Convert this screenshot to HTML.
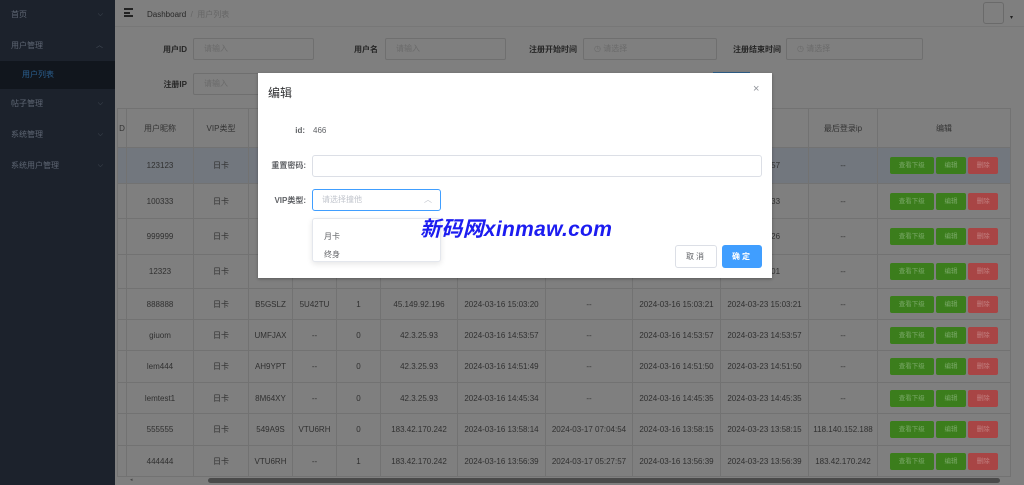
<!DOCTYPE html>
<html><head><meta charset="utf-8"><style>
*{margin:0;padding:0;box-sizing:border-box}
body{width:1024px;height:485px;overflow:hidden;background:#7f7f7f;font-family:"Liberation Sans","Noto Sans CJK SC",sans-serif;font-size:8px;color:#2e2e2e;position:relative}
.a{position:absolute}
.side{left:0;top:0;width:115px;height:485px;background:#1c222c}
.mi{left:0;width:115px;height:30px;line-height:30px;padding-left:11px;color:#5e6673;font-size:8px}
.mi .ar{position:absolute;right:12px;top:0;color:#4d5560;font-size:7px}
.inp{border:1px solid #6f6f6f;border-radius:2px;height:22px;line-height:20px;padding-left:10px;color:#6a6a6a;background:#7f7f7f}
.lbl{font-weight:bold;color:#262626;text-align:right}
table{border-collapse:collapse;position:absolute;left:117px;top:108px;table-layout:fixed}
td{border:1px solid #727272;text-align:center;color:#303030;font-size:8px;white-space:nowrap;overflow:hidden}
.hd td{height:39px;color:#333}
.b{display:inline-block;height:17px;line-height:17px;border-radius:2px;color:#6f8f60;font-size:6.5px;vertical-align:middle}
.g{background:#3b7d1c;color:#7aa868}.r{background:#a84545;color:#c28080}
</style></head><body>
<div class="a side">
<div class="a mi" style="top:0">首页<span class="ar">⌵</span></div>
<div class="a mi" style="top:31px">用户管理<span class="ar">︿</span></div>
<div class="a mi" style="top:61px;height:28px;line-height:28px;background:#11161d;padding-left:22px;color:#2a5f8f">用户列表</div>
<div class="a mi" style="top:89px">帖子管理<span class="ar">⌵</span></div>
<div class="a mi" style="top:120px">系统管理<span class="ar">⌵</span></div>
<div class="a mi" style="top:151px">系统用户管理<span class="ar">⌵</span></div>
</div>
<div class="a" style="left:115px;top:0;width:909px;height:27px;border-bottom:1px solid #777"></div>
<div class="a" style="left:124px;top:8px;width:9px;height:9px;border-top:2px solid #222;border-bottom:2px solid #222"><div style="margin-top:1.5px;width:6px;height:2px;background:#222"></div></div>
<div class="a" style="left:147px;top:9px;color:#282828">Dashboard <span style="color:#666">&nbsp;/&nbsp; 用户列表</span></div>
<div class="a" style="left:983px;top:2px;width:21px;height:22px;border:1px solid #6a6a6a;border-radius:3px"></div>
<div class="a" style="left:1010px;top:14px;font-size:6px;color:#222">▾</div>

<div class="a lbl" style="left:150px;top:44px;width:37px">用户ID</div>
<div class="a inp" style="left:193px;top:38px;width:121px">请输入</div>
<div class="a lbl" style="left:340px;top:44px;width:38px">用户名</div>
<div class="a inp" style="left:385px;top:38px;width:121px">请输入</div>
<div class="a lbl" style="left:520px;top:44px;width:57px">注册开始时间</div>
<div class="a inp" style="left:583px;top:38px;width:134px">◷ 请选择</div>
<div class="a lbl" style="left:725px;top:44px;width:56px">注册结束时间</div>
<div class="a inp" style="left:786px;top:38px;width:137px">◷ 请选择</div>
<div class="a lbl" style="left:150px;top:79px;width:37px">注册IP</div>
<div class="a inp" style="left:193px;top:73px;width:121px">请输入</div>
<div class="a" style="left:713px;top:72px;width:37px;height:2px;background:#2f5f8a"></div>

<table>
<colgroup><col width="9"><col width="67"><col width="55"><col width="44"><col width="44"><col width="44"><col width="77"><col width="88"><col width="87"><col width="88"><col width="88"><col width="69"><col width="133"></colgroup>
<tr class="hd"><td>D</td><td>用户昵称</td><td>VIP类型</td><td></td><td></td><td></td><td></td><td></td><td></td><td></td><td>时间</td><td>最后登录ip</td><td>编辑</td></tr>
<tr style="height:36px;background:#72777e"><td></td><td>123123</td><td>日卡</td><td></td><td></td><td></td><td></td><td></td><td></td><td></td><td>16:37:57</td><td>--</td><td><span class="b g" style="width:44px">查看下级</span> <span class="b g" style="width:30px">编辑</span> <span class="b r" style="width:30px">删除</span></td></tr>
<tr style="height:35px"><td></td><td>100333</td><td>日卡</td><td></td><td></td><td></td><td></td><td></td><td></td><td></td><td>02:19:33</td><td>--</td><td><span class="b g" style="width:44px">查看下级</span> <span class="b g" style="width:30px">编辑</span> <span class="b r" style="width:30px">删除</span></td></tr>
<tr style="height:36px"><td></td><td>999999</td><td>日卡</td><td></td><td></td><td></td><td></td><td></td><td></td><td></td><td>07:06:26</td><td>--</td><td><span class="b g" style="width:44px">查看下级</span> <span class="b g" style="width:30px">编辑</span> <span class="b r" style="width:30px">删除</span></td></tr>
<tr style="height:34px"><td></td><td>12323</td><td>日卡</td><td></td><td></td><td></td><td></td><td></td><td></td><td></td><td>15:05:01</td><td>--</td><td><span class="b g" style="width:44px">查看下级</span> <span class="b g" style="width:30px">编辑</span> <span class="b r" style="width:30px">删除</span></td></tr>
<tr style="height:31px"><td></td><td>888888</td><td>日卡</td><td>B5GSLZ</td><td>5U42TU</td><td>1</td><td>45.149.92.196</td><td>2024-03-16 15:03:20</td><td>--</td><td>2024-03-16 15:03:21</td><td>2024-03-23 15:03:21</td><td>--</td><td><span class="b g" style="width:44px">查看下级</span> <span class="b g" style="width:30px">编辑</span> <span class="b r" style="width:30px">删除</span></td></tr>
<tr style="height:31px"><td></td><td>giuom</td><td>日卡</td><td>UMFJAX</td><td>--</td><td>0</td><td>42.3.25.93</td><td>2024-03-16 14:53:57</td><td>--</td><td>2024-03-16 14:53:57</td><td>2024-03-23 14:53:57</td><td>--</td><td><span class="b g" style="width:44px">查看下级</span> <span class="b g" style="width:30px">编辑</span> <span class="b r" style="width:30px">删除</span></td></tr>
<tr style="height:32px"><td></td><td>lem444</td><td>日卡</td><td>AH9YPT</td><td>--</td><td>0</td><td>42.3.25.93</td><td>2024-03-16 14:51:49</td><td>--</td><td>2024-03-16 14:51:50</td><td>2024-03-23 14:51:50</td><td>--</td><td><span class="b g" style="width:44px">查看下级</span> <span class="b g" style="width:30px">编辑</span> <span class="b r" style="width:30px">删除</span></td></tr>
<tr style="height:31px"><td></td><td>lemtest1</td><td>日卡</td><td>8M64XY</td><td>--</td><td>0</td><td>42.3.25.93</td><td>2024-03-16 14:45:34</td><td>--</td><td>2024-03-16 14:45:35</td><td>2024-03-23 14:45:35</td><td>--</td><td><span class="b g" style="width:44px">查看下级</span> <span class="b g" style="width:30px">编辑</span> <span class="b r" style="width:30px">删除</span></td></tr>
<tr style="height:32px"><td></td><td>555555</td><td>日卡</td><td>549A9S</td><td>VTU6RH</td><td>0</td><td>183.42.170.242</td><td>2024-03-16 13:58:14</td><td>2024-03-17 07:04:54</td><td>2024-03-16 13:58:15</td><td>2024-03-23 13:58:15</td><td>118.140.152.188</td><td><span class="b g" style="width:44px">查看下级</span> <span class="b g" style="width:30px">编辑</span> <span class="b r" style="width:30px">删除</span></td></tr>
<tr style="height:31px"><td></td><td>444444</td><td>日卡</td><td>VTU6RH</td><td>--</td><td>1</td><td>183.42.170.242</td><td>2024-03-16 13:56:39</td><td>2024-03-17 05:27:57</td><td>2024-03-16 13:56:39</td><td>2024-03-23 13:56:39</td><td>183.42.170.242</td><td><span class="b g" style="width:44px">查看下级</span> <span class="b g" style="width:30px">编辑</span> <span class="b r" style="width:30px">删除</span></td></tr>
</table>
<div class="a" style="left:130px;top:477px;font-size:5px;color:#444">◂</div>
<div class="a" style="left:208px;top:478px;width:792px;height:5px;border-radius:3px;background:#4a4a4a"></div>

<div class="a" style="left:258px;top:73px;width:514px;height:205px;background:#fff;box-shadow:0 1px 3px rgba(0,0,0,.3)">
<div class="a" style="left:10px;top:11px;font-size:12px;color:#303133">编辑</div>
<div class="a" style="left:495px;top:10px;font-size:11px;color:#909399">×</div>
<div class="a" style="left:20px;top:53px;width:27px;text-align:right;font-weight:bold;color:#606266">id:</div>
<div class="a" style="left:55px;top:53px;color:#606266">466</div>
<div class="a" style="left:5px;top:87px;width:43px;text-align:right;font-weight:bold;color:#606266">重置密码:</div>
<div class="a" style="left:54px;top:82px;width:450px;height:22px;border:1px solid #dcdfe6;border-radius:3px"></div>
<div class="a" style="left:5px;top:122px;width:43px;text-align:right;font-weight:bold;color:#606266">VIP类型:</div>
<div class="a" style="left:54px;top:116px;width:129px;height:22px;border:1px solid #409eff;border-radius:3px;line-height:20px;padding-left:9px;color:#c0c4cc">请选择撞他<span style="position:absolute;right:8px;color:#c0c4cc">︿</span></div>
<div class="a" style="left:54px;top:145px;width:129px;height:44px;border:1px solid #e4e7ed;border-radius:3px;box-shadow:0 2px 6px rgba(0,0,0,.1);background:#fff">
<div style="padding:9px 0 0 11px;color:#606266;line-height:18px">月卡<br>终身</div></div>
<div class="a" style="left:417px;top:172px;width:42px;height:23px;border:1px solid #dcdfe6;border-radius:3px;text-align:center;line-height:21px;color:#606266;letter-spacing:2px">取消</div>
<div class="a" style="left:464px;top:172px;width:40px;height:23px;background:#409eff;border-radius:3px;text-align:center;line-height:23px;color:#fff;font-weight:bold;letter-spacing:2px">确定</div>
</div>
<div class="a" style="left:420px;top:213px;font-size:21px;color:#1c1cf0;font-style:italic;font-weight:bold;letter-spacing:0.3px;font-family:'Liberation Sans','Noto Sans CJK SC',sans-serif">新码网xinmaw.com</div>
</body></html>
